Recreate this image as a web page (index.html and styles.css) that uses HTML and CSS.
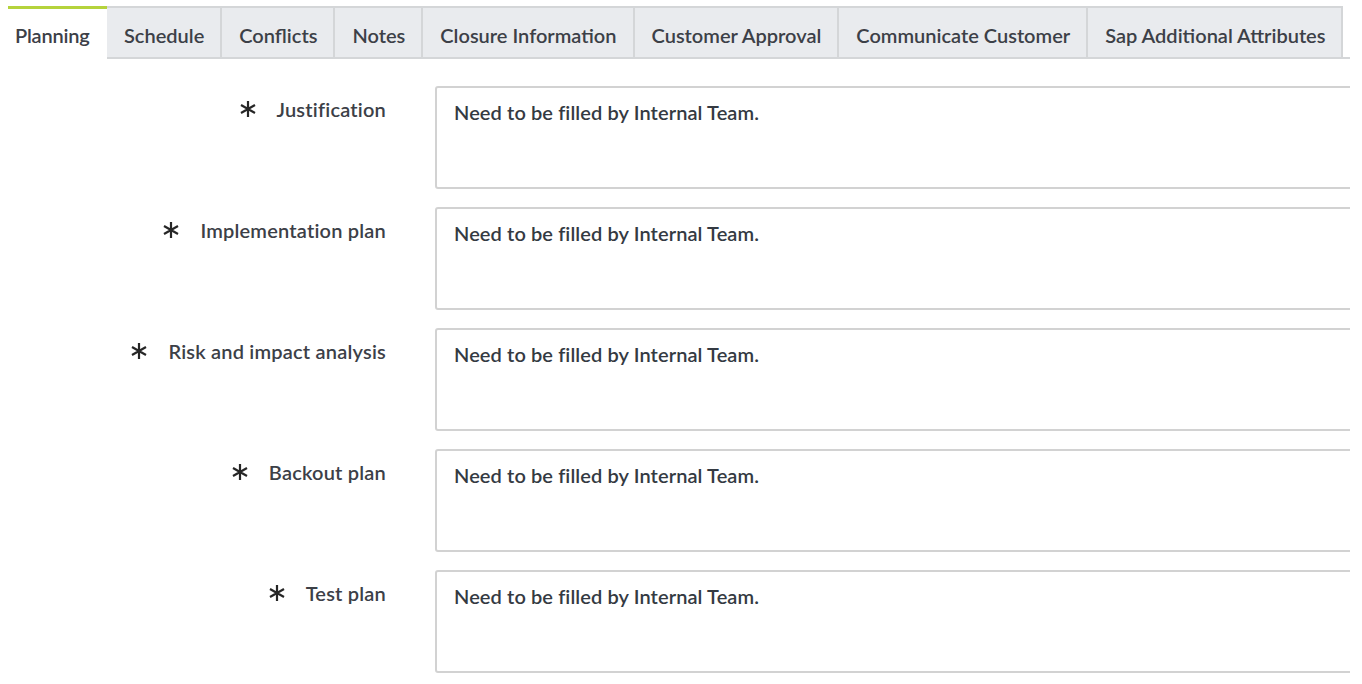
FILE: index.html
```html
<!DOCTYPE html>
<html>
<head>
<meta charset="utf-8">
<link rel="stylesheet" href="styles.css">
</head>
<body>
<div class="page">
  <div class="tabs">
    <div class="tab active">Planning</div>
    <div class="tab">Schedule</div>
    <div class="tab">Conflicts</div>
    <div class="tab">Notes</div>
    <div class="tab">Closure Information</div>
    <div class="tab">Customer Approval</div>
    <div class="tab">Communicate Customer</div>
    <div class="tab last">Sap Additional Attributes</div>
    <div class="tab-rest"></div>
  </div>
  <div class="form">
    <div class="row">
      <label class="label"><svg class="req" viewBox="0 0 16 18"><path d="M8 1V17M1 5L15 13M1 13L15 5"/></svg>Justification</label>
      <div class="box">Need to be filled by Internal Team.</div>
    </div>
    <div class="row">
      <label class="label"><svg class="req" viewBox="0 0 16 18"><path d="M8 1V17M1 5L15 13M1 13L15 5"/></svg>Implementation plan</label>
      <div class="box">Need to be filled by Internal Team.</div>
    </div>
    <div class="row">
      <label class="label"><svg class="req" viewBox="0 0 16 18"><path d="M8 1V17M1 5L15 13M1 13L15 5"/></svg>Risk and impact analysis</label>
      <div class="box">Need to be filled by Internal Team.</div>
    </div>
    <div class="row">
      <label class="label"><svg class="req" viewBox="0 0 16 18"><path d="M8 1V17M1 5L15 13M1 13L15 5"/></svg>Backout plan</label>
      <div class="box">Need to be filled by Internal Team.</div>
    </div>
    <div class="row">
      <label class="label"><svg class="req" viewBox="0 0 16 18"><path d="M8 1V17M1 5L15 13M1 13L15 5"/></svg>Test plan</label>
      <div class="box">Need to be filled by Internal Team.</div>
    </div>
  </div>
</div>
</body>
</html>
```

FILE: styles.css
```css
html, body {
  margin: 0;
  padding: 0;
  background: #ffffff;
  overflow: hidden;
}
body {
  font-family: Lato, "Liberation Sans", sans-serif;
  color: #3a3a3a;
  width: 1362px;
  height: 684px;
}
.page {
  padding: 6px 0 0 8px;
  width: 1342px;
  overflow: hidden;
}
.tabs {
  display: flex;
  align-items: stretch;
  height: 53px;
}
.tab {
  box-sizing: border-box;
  background: #e9ebee;
  border-top: 2px solid #d4d6d8;
  border-right: 2px solid #d4d6d8;
  border-bottom: 2px solid #d4d6d8;
  padding: 4px 16px 0 17px;
  display: flex;
  align-items: center;
  font-size: 20px;
  font-weight: 600;
  color: #3c4047;
  letter-spacing: 0;
  white-space: nowrap;
}
.tab.active {
  background: #ffffff;
  border-top: 3px solid #b5d33c;
  border-bottom: 2px solid transparent;
  border-right: none;
  padding: 4px 0 0 7px;
  width: 99px;
  letter-spacing: -0.2px;
}
.tab-rest {
  flex: 1;
  border-bottom: 2px solid #d4d6d8;
  box-sizing: border-box;
}
.form {
  padding-top: 27px;
  display: flex;
  flex-direction: column;
  gap: 18px;
}
.row {
  display: flex;
  align-items: flex-start;
}
.label {
  width: 378px;
  flex: none;
  display: flex;
  justify-content: flex-end;
  align-items: center;
  padding-top: 11px;
  font-size: 20px;
  font-weight: 600;
  letter-spacing: 0.2px;
  color: #3c4047;
}
.req {
  width: 16px;
  height: 18px;
  margin-right: 21px;
  stroke: #262626;
  stroke-width: 2.2;
  fill: none;
}
.box {
  margin-left: 49px;
  flex: none;
  width: 960px;
  height: 103px;
  box-sizing: border-box;
  border: 2px solid #d2d2d2;
  border-radius: 3px;
  padding: 12px 0 0 17px;
  font-size: 20px;
  font-weight: 600;
  letter-spacing: 0.1px;
  color: #343a42;
}
```
